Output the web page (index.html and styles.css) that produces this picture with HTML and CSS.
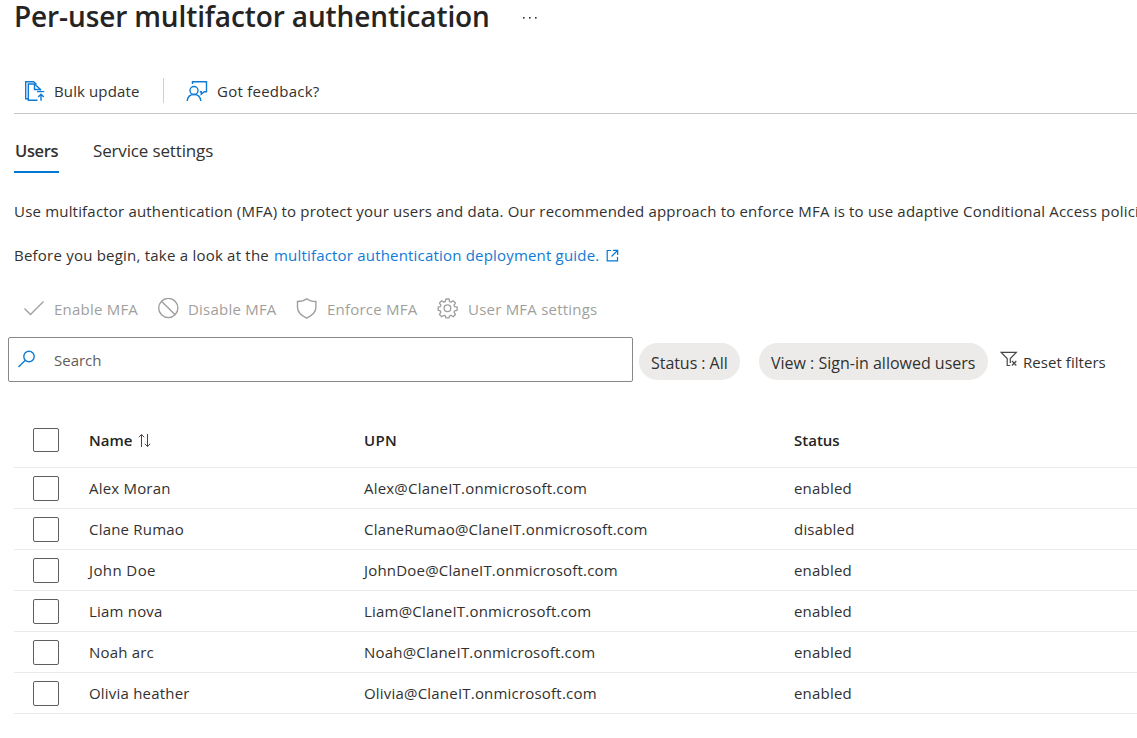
FILE: index.html
```
<!DOCTYPE html>
<html lang="en">
<head>
<meta charset="utf-8">
<title>Per-user multifactor authentication</title>
<link rel="stylesheet" href="styles.css">
</head>
<body>
<header class="heading">
  <h1 class="title">Per-user multifactor authentication</h1>
  <svg class="more" width="16" height="4" viewBox="0 0 16 4" fill="#323130"><rect x="1" y="1" width="1.6" height="1.6"/><rect x="7" y="1" width="1.6" height="1.6"/><rect x="13" y="1" width="1.6" height="1.6"/></svg>
</header>
<div class="toolbar">
  <svg class="icon bulk" width="22" height="22" viewBox="0 0 22 22" fill="none" stroke="#0f7bd4" stroke-width="1.4"><path d="M4 18.700H1.700V1.700h7.800l3 2.500"/><path d="M13.500 20.300H4.300V4h6.200l6 5.500v1"/><path d="M10.500 4v5.500h6"/><path d="M13 11.600h7.200M17 20.800v-6M14.200 17l2.800-2.700 2.800 2.700"/></svg>
  <span class="tool t-bulk">Bulk update</span>
  <span class="divider"></span>
  <svg class="icon" width="22" height="22" viewBox="0 0 22 22" fill="none" stroke="#0f7bd4" stroke-width="1.4"><circle cx="8" cy="10.5" r="4"/><path d="M1.2 21c.4-3.900 3-6.500 6.800-6.500s6.400 2.600 6.800 6.500"/><path d="M6.500 4V1.700h14v10h-2.200l-3 2.600v-2.600h-1.500"/></svg>
  <span class="tool t-feedback">Got feedback?</span>
</div>
<nav class="tabs">
  <span class="tab active">Users</span>
  <span class="tab">Service settings</span>
</nav>
<p class="text intro">Use multifactor authentication (MFA) to protect your users and data. Our recommended approach to enforce MFA is to use adaptive Conditional Access policies.</p>
<p class="text"><span>Before you begin, take a look at the</span> <a class="link">multifactor authentication deployment guide.</a><svg class="external" width="13" height="13" viewBox="0 0 13 13" fill="none" stroke="#0078d4" stroke-width="1.2"><path d="M5 1.500H1.200v10.300h10.300V8M7 1.300h4.700V6M11.500 1.500L5.500 7.500"/></svg></p>
<div class="commands">
  <svg width="22" height="22" viewBox="0 0 22 22" fill="none" stroke="#a19f9d" stroke-width="1.400"><path d="M1.500 10.500l6 6L20.500 3.500"/></svg>
  <span class="command c-enable">Enable MFA</span>
  <svg width="22" height="22" viewBox="0 0 22 22" fill="none" stroke="#a19f9d" stroke-width="1.400"><circle cx="11.300" cy="10" r="9.600"/><path d="M4.500 3.200l13.600 13.600"/></svg>
  <span class="command c-disable">Disable MFA</span>
  <svg width="22" height="22" viewBox="0 0 22 22" fill="none" stroke="#a19f9d" stroke-width="1.400"><path d="M10.700.8c2.500 2 5.600 2.700 9.200 2.700v6c0 5-3.800 8-9.200 10.700C5.300 17.500 1.500 14.500 1.500 9.500v-6C5.100 3.500 8.200 2.800 10.700.8z"/></svg>
  <span class="command c-enforce">Enforce MFA</span>
  <svg width="22" height="22" viewBox="0 0 22 22" fill="none" stroke="#a19f9d" stroke-width="1.400" stroke-linejoin="round"><g transform="translate(0 -.4) scale(.95)"><path d="M9.300 1.500h3.400l.5 2.700 1.500.6 2.300-1.500 2.400 2.400-1.500 2.300.6 1.500 2.700.5v3.400l-2.700.5-.6 1.500 1.500 2.300-2.400 2.400-2.300-1.500-1.500.6-.5 2.200H9.300l-.5-2.200-1.500-.6L5 20.100 2.600 17.700l1.500-2.300-.6-1.500-2.200-.5V10l2.200-.5.6-1.500-1.500-2.300L5 3.300l2.300 1.500 1.500-.6z"/><circle cx="11" cy="11.200" r="3.500"/></g></svg>
  <span class="command">User MFA settings</span>
</div>
<div class="filters">
  <div class="search">
    <svg width="18" height="18" viewBox="0 0 18 18" fill="none" stroke="#0f7bd4" stroke-width="1.400"><circle cx="11" cy="6.500" r="5.200"/><path d="M7.300 10.200L.5 17"/></svg>
    <span>Search</span>
  </div>
  <span class="pill pill-status">Status : All</span>
  <span class="pill pill-view">View : Sign-in allowed users</span>
  <svg class="funnel" width="18" height="17" viewBox="0 0 18 17" fill="none" stroke="#484644" stroke-width="1.200"><path d="M10.300 12V7.500L16.300 1.300H1.200L7.200 7.500v7h3"/><path d="M12 10l4.300 4.500M16.300 10L12 14.500"/></svg>
  <span class="t-reset">Reset filters</span>
</div>
<div class="table">
  <div class="row head"><span class="box"></span><span class="name">Name<svg width="13" height="15" viewBox="0 0 13 15" fill="none" stroke="#484644" stroke-width="1"><path d="M3.500 14V1.500M.8 4.200l2.700-2.700 2.700 2.700M9.500 1v12.500M6.800 10.800l2.700 2.700 2.700-2.700"/></svg></span><span class="upn t-upn">UPN</span><span>Status</span></div>
  <div class="row"><span class="box"></span><span class="name">Alex Moran</span><span class="upn">Alex@ClaneIT.onmicrosoft.com</span><span>enabled</span></div>
  <div class="row"><span class="box"></span><span class="name">Clane Rumao</span><span class="upn">ClaneRumao@ClaneIT.onmicrosoft.com</span><span class="off">disabled</span></div>
  <div class="row"><span class="box"></span><span class="name john">John Doe</span><span class="upn">JohnDoe@ClaneIT.onmicrosoft.com</span><span>enabled</span></div>
  <div class="row"><span class="box"></span><span class="name">Liam nova</span><span class="upn">Liam@ClaneIT.onmicrosoft.com</span><span>enabled</span></div>
  <div class="row"><span class="box"></span><span class="name">Noah arc</span><span class="upn">Noah@ClaneIT.onmicrosoft.com</span><span>enabled</span></div>
  <div class="row"><span class="box"></span><span class="name">Olivia heather</span><span class="upn">Olivia@ClaneIT.onmicrosoft.com</span><span>enabled</span></div>
</div>
</body>
</html>
```
FILE: styles.css
```
* { box-sizing: border-box; }
body {
  margin: 0;
  padding-left: 14px;
  height: 738px;
  overflow: hidden;
  background: #fff;
  color: #323130;
  font: 15px/20px "Open Sans", "Noto Sans", sans-serif;
  white-space: nowrap;
}
svg { flex: none; display: block; }
.heading { display: flex; height: 68px; }
.title { margin: 0; width: 508px; font-size: 28px; line-height: 32px; font-weight: 600; letter-spacing: -0.12px; color: #252423; }
.more { margin-top: 16px; }
.toolbar { display: flex; align-items: center; height: 46px; border-bottom: 1px solid #c8c6c4; padding-left: 9px; }
.icon { margin-right: 9px; }
.bulk { margin: 0 8px 0 1px; }
.tool { width: 109px; }
.t-bulk { letter-spacing: 0.12px; }
.t-feedback { letter-spacing: 0.25px; }
.divider { width: 1px; height: 25px; background: #d2d0ce; margin-right: 22px; }
.tabs { display: flex; gap: 34px; height: 59px; font-size: 17px; line-height: 24px; padding-top: 25px; }
.tab { height: 34px; letter-spacing: -0.15px; }
.active { width: 45px; padding-left: 1px; font-size: 16.5px; font-weight: 600; letter-spacing: -0.35px; border-bottom: 2px solid #0078d4; }
.text { display: flex; align-items: center; margin: 0; height: 44px; letter-spacing: 0.22px; }
.intro { margin-top: 16px; letter-spacing: 0.19px; }
.link { color: #0f7bd4; margin-left: 5px; letter-spacing: 0.19px; }
.external { margin-left: 7px; }
.commands { display: flex; align-items: center; height: 24px; margin-top: 20px; padding-left: 9px; color: #a19f9d; letter-spacing: 0.22px; }
.command { padding-left: 9px; }
.c-enable { width: 112px; }
.c-disable { width: 117px; }
.c-enforce { width: 119px; }
.filters { display: flex; align-items: center; height: 45px; margin: 16px 0 0 -6px; }
.search { display: flex; align-items: center; width: 625px; height: 45px; border: 1px solid #8a8886; border-radius: 2px; padding-left: 9px; gap: 18px; color: #605e5c; }
.search svg { margin-bottom: 2px; }
.pill { height: 37px; margin-top: 4px; border-radius: 19px; background: #edebe9; padding: 10px 0 0 12px; font-size: 16px; line-height: 21px; }
.pill-status { width: 101px; margin-left: 6px; letter-spacing: -0.05px; }
.pill-view { width: 229px; margin-left: 19px; }
.funnel { margin-left: 12px; }
.t-reset { margin: 5px 0 0 5px; letter-spacing: 0.05px; }
.table { margin-top: 31px; }
.row { display: flex; align-items: center; height: 41px; padding-left: 19px; border-bottom: 1px solid #edebe9; letter-spacing: 0.2px; }
.head { height: 55px; font-weight: 600; letter-spacing: 0; color: #252423; }
.box { width: 26px; height: 25px; margin: 1px 30px 0 0; border: 1px solid #605e5c; border-radius: 2px; }
.head .box { height: 24px; margin-top: 0; }
.name { display: flex; align-items: center; width: 275px; gap: 6px; }
.john { letter-spacing: 0.4px; }
.upn { width: 430px; }
.t-upn { letter-spacing: 0.3px; }
```
